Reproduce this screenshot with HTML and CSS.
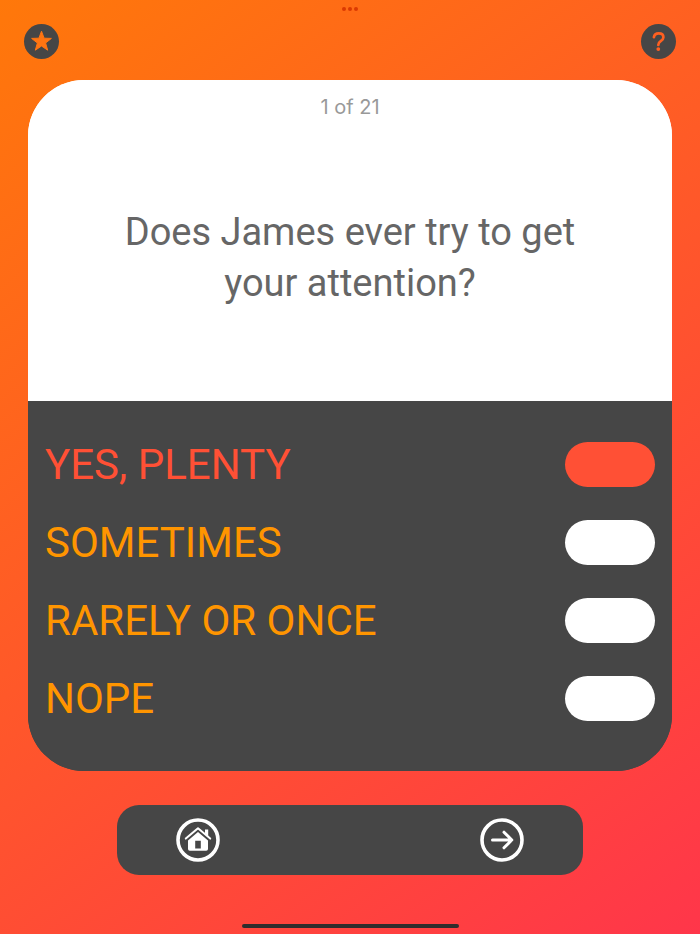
FILE: index.html
```html
<!DOCTYPE html>
<html lang="en">
<head>
  <meta charset="UTF-8">
  <meta name="viewport" content="width=device-width, initial-scale=1.0">
  <title>Quiz</title>
  <link rel="stylesheet" href="styles.css">
</head>
<body>

  <div class="dots"><span></span><span></span><span></span></div>

  <header class="topbar">
    <button type="button" class="round-btn" aria-label="Favourites">
      <svg viewBox="0 0 35 35">
        <path class="star" d="M17.5 7.2 L20.1 14.2 L27.4 14.4 L21.6 19 L23.7 26.2 L17.5 22 L11.3 26.2 L13.4 19 L7.6 14.4 L14.9 14.2 Z"/>
      </svg>
    </button>
    <button type="button" class="round-btn" aria-label="Help">
      <svg viewBox="0 0 35 35">
        <path class="hook" d="M12.9 13.2 C13.3 10.6 15.1 9.4 17.7 9.4 C20.5 9.4 22.4 10.9 22.4 13.2 C22.4 15.2 21.2 16.2 19.7 17.2 C18 18.3 17.3 19 17.3 21"/>
        <circle class="dot" cx="17.3" cy="25.1" r="1.9"/>
      </svg>
    </button>
  </header>

  <main class="card">
    <section class="question">
      <p class="counter">1 of 21</p>
      <h1>Does James ever try to get your attention?</h1>
    </section>
    <form class="answers">
      <label class="answer"><input type="radio" name="answer" value="plenty" checked><span>YES, PLENTY</span></label>
      <label class="answer"><input type="radio" name="answer" value="sometimes"><span>SOMETIMES</span></label>
      <label class="answer"><input type="radio" name="answer" value="rarely"><span>RARELY OR ONCE</span></label>
      <label class="answer"><input type="radio" name="answer" value="nope"><span>NOPE</span></label>
    </form>
  </main>

  <nav class="bottombar">
    <button type="button" class="nav-btn" aria-label="Home">
      <svg viewBox="0 0 44 44">
        <circle class="line ring" cx="22" cy="22" r="20"/>
        <path class="line roof" d="M9.8 20.6 L22 10.2 L34.2 20.6"/>
        <path class="solid" d="M29 11.4 H32.2 V18.4 L29 15.6 Z"/>
        <path class="solid" fill-rule="evenodd" d="M22 14 L32 22.4 V31 Q32 32.8 30.2 32.8 H13.8 Q12 32.8 12 31 V22.4 Z M19.2 22.8 V30.6 H24.8 V22.8 Z"/>
      </svg>
    </button>
    <button type="button" class="nav-btn" aria-label="Next">
      <svg viewBox="0 0 44 44">
        <circle class="line ring" cx="22" cy="22" r="20"/>
        <path class="line arrow" d="M12.5 22 H31.5 M24 14.2 L31.8 22 L24 29.8"/>
      </svg>
    </button>
  </nav>

  <div class="home-indicator"></div>

</body>
</html>
```

FILE: styles.css
```css
* { box-sizing: border-box; }
body { display: flex; flex-direction: column; align-items: center; min-height: 100vh; margin: 0; padding: 7px 0 6px; background: linear-gradient(144deg, #ff780a, #ff364a); font-family: Roboto, "Liberation Sans", sans-serif; }
button { padding: 0; border: none; background: none; cursor: pointer; }
svg { display: block; width: 100%; height: 100%; }

.dots { display: flex; gap: 2px; height: 4px; }
.dots span { width: 4px; height: 4px; border-radius: 50%; background-color: #db3a02; }

.topbar { display: flex; justify-content: space-between; width: 100%; padding: 13px 24px 21px; }
.round-btn { width: 35px; height: 35px; border-radius: 50%; background-color: #464646; }
.star { fill: #ff7411; stroke: #ff7411; stroke-width: 1; stroke-linejoin: round; }
.hook { fill: none; stroke: #ff5f20; stroke-width: 2.7; stroke-linecap: round; }
.dot { fill: #ff5f20; }

.card { display: flex; flex-direction: column; flex: 1; width: 92%; border-radius: 56px; overflow: hidden; background: linear-gradient(#fff 50%, #464646 50%); }
.question { display: flex; flex-direction: column; flex: 1; padding: 15px 0 5px; background-color: #fff; text-align: center; }
.counter { margin: 0; font-family: Inter, "Liberation Sans", sans-serif; font-size: 20px; line-height: 24px; color: #999; }
h1 { margin: auto; padding: 0 80px; font-size: 38px; line-height: 51px; font-weight: 400; color: #666; }

.answers { display: flex; flex-direction: column; gap: 33px; padding: 41px 17px 50px; background-color: #464646; }
.answer { display: flex; flex-direction: row-reverse; align-items: center; justify-content: space-between; font-size: 42px; line-height: 45px; color: #ff9500; cursor: pointer; }
.answer input { appearance: none; width: 90px; height: 45px; margin: 0; border-radius: 23px; background-color: #fff; cursor: pointer; }
.answer input:checked { background-color: #ff5035; }
.answer input:checked + span { color: #ff5035; }

.bottombar { display: flex; align-items: center; justify-content: space-between; width: 66.6%; height: 70px; margin: 34px 0 49px; padding: 0 59px; border-radius: 22px; background-color: #464646; }
.nav-btn { width: 44px; height: 44px; }
.line { fill: none; stroke: #fff; stroke-linecap: round; stroke-linejoin: round; }
.ring { stroke-width: 3.6; }
.roof { stroke-width: 2; }
.arrow { stroke-width: 3; }
.solid { fill: #fff; }

.home-indicator { width: 31%; height: 4px; border-radius: 2px; background-color: #302d2d; }
```
